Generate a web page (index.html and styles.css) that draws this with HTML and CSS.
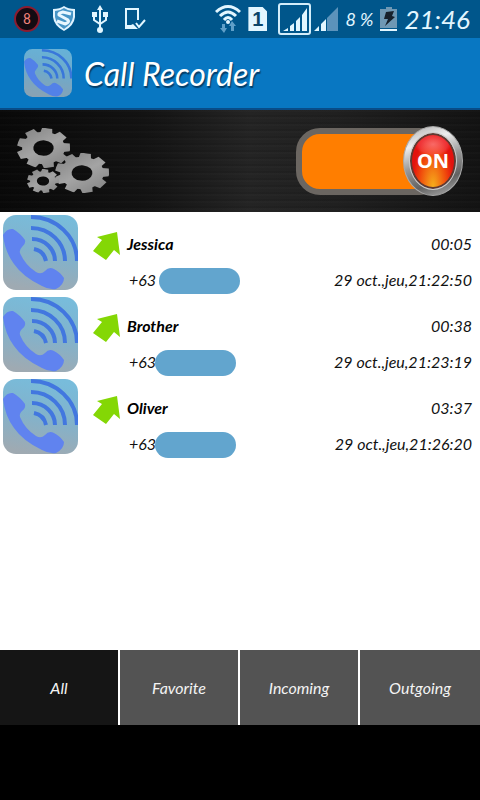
FILE: index.html
```html
<!DOCTYPE html>
<html lang="en">
<head>
  <meta charset="UTF-8" />
  <meta name="viewport" content="width=device-width, initial-scale=1.0" />
  <title>Call Recorder</title>
  <link rel="stylesheet" href="styles.css">
</head>
<body>

  <!-- shared shapes -->
  <svg class="defs" aria-hidden="true">
    <defs>
      <linearGradient id="tile" x1="0.6" y1="0" x2="0.4" y2="1">
        <stop offset="0" stop-color="#78bcdb" />
        <stop offset="0.5" stop-color="#82b2cb" />
        <stop offset="1" stop-color="#9faab2" />
      </linearGradient>
      <linearGradient id="metal" x1="0" y1="0" x2="1" y2="1">
        <stop offset="0" stop-color="#808080" />
        <stop offset="0.5" stop-color="#a4a4a4" />
        <stop offset="1" stop-color="#808080" />
      </linearGradient>
      <clipPath id="round"><rect width="75" height="75" rx="13" /></clipPath>
      <mask id="gear-mask">
        <circle r="21" fill="#fff" />
        <g fill="#fff">
          <path id="tooth" d="M-6-19L-5-26H5L6-19Z" />
          <use href="#tooth" transform="rotate(40)" />
          <use href="#tooth" transform="rotate(80)" />
          <use href="#tooth" transform="rotate(120)" />
          <use href="#tooth" transform="rotate(160)" />
          <use href="#tooth" transform="rotate(200)" />
          <use href="#tooth" transform="rotate(240)" />
          <use href="#tooth" transform="rotate(280)" />
          <use href="#tooth" transform="rotate(320)" />
        </g>
        <circle r="10" fill="#000" />
      </mask>
    </defs>
    <symbol id="phone" viewBox="0 0 75 75">
      <g clip-path="url(#round)">
        <rect width="75" height="75" fill="url(#tile)" />
        <path fill="#6083ef" d="M0 20Q4 13 10 14Q17 18 22 25Q23 29 19 32Q16 35 17 38Q22 50 33 57Q38 60 42 56Q46 51 51 54Q57 57 61 63Q61 70 53 74Q46 75 39 71Q20 62 11 49Q2 37 0 20Z" />
        <g fill="none" stroke="#4277df" stroke-width="4">
          <path d="M28 2A46 44 0 0 1 74 46" />
          <path d="M28 13A34 33 0 0 1 62 46" />
          <path d="M29 24A23 22 0 0 1 52 46" />
          <path d="M31 34Q41 36 43 46" />
        </g>
      </g>
    </symbol>
    <symbol id="arrow" viewBox="0 0 28 28">
      <path fill="#84d705" d="M4 5L24 0L27 23L21 18L13 28L0 19L9 8Z" />
    </symbol>
    <symbol id="gear" viewBox="-26 -26 52 52" preserveAspectRatio="none">
      <rect x="-26" y="-26" width="52" height="52" fill="url(#metal)" mask="url(#gear-mask)" transform="rotate(8)" />
    </symbol>
  </svg>

  <div class="status-bar">
    <div class="status-left">
      <span class="counter">8</span>
      <svg width="24" height="26" viewBox="0 0 24 26">
        <path fill="#dff3ff" d="M12 0Q16 3 23 3V11Q22 20 12 25Q2 20 1 11V3Q8 3 12 0Z" />
        <path fill="#4695c7" d="M12 2Q16 5 21 5V11Q20 18 12 23Q4 18 3 11V5Q8 5 12 2Z" />
        <path fill="none" stroke="#e8f7ff" stroke-width="3" d="M19 8L11 6Q6 7 7 9L16 14Q18 16 13 18L5 15" />
      </svg>
      <svg width="16" height="28" viewBox="0 0 16 28">
        <path fill="none" stroke="#e2f6ff" stroke-width="2" d="M8 3V24M2 10V15L8 19L14 15V10" />
        <path fill="#e2f6ff" d="M8 0L11 5H5ZM0 7H5V12H0ZM11 7H16V12H11Z" />
        <circle cx="8" cy="25" r="3" fill="#e2f6ff" />
      </svg>
      <svg width="22" height="24" viewBox="0 0 22 24">
        <path fill="none" stroke="#e2f6ff" stroke-width="2" d="M14 13V2H2V21H10" />
        <path fill="#e2f6ff" d="M1 18H7L9 17L14 22H1Z" />
        <path fill="none" stroke="#e2f6ff" stroke-width="2" d="M12 16L15 20L21 13" />
      </svg>
    </div>
    <div class="status-right">
      <svg width="26" height="30" viewBox="0 0 26 30">
        <g fill="none" stroke="#e2f6ff" stroke-width="3">
          <path d="M1 8Q13-3 25 8" />
          <path d="M5 12Q13 4 21 12" />
          <path d="M9 16Q13 11 17 16" />
        </g>
        <circle cx="13" cy="18" r="2" fill="#e2f6ff" />
        <path fill="#5f9fc8" d="M7 20H10V24H12L9 29L5 24H7ZM16 27V22H14L17 17L21 22H19V27Z" />
      </svg>
      <span class="sim">1</span>
      <svg width="33" height="32" viewBox="0 0 33 32">
        <rect x="1" y="1" width="31" height="30" rx="2" fill="none" stroke="#d3edfa" stroke-width="2" />
        <path fill="#e2f6ff" d="M5 28L10 25V28ZM12 23L16 20V28H12ZM18 18L22 14V28H18ZM24 12L29 5V28H24Z" />
      </svg>
      <svg class="signal" width="24" height="24" viewBox="0 0 24 24">
        <path fill="#5c93bb" d="M13 11L24 0V24H13Z" />
        <path fill="#e2f6ff" d="M0 24L5 19V24ZM7 17L12 12V24H7Z" />
      </svg>
      <span class="percent">8 %</span>
      <svg width="17" height="24" viewBox="0 0 17 24">
        <path fill="#6f98b4" d="M6 0H12V2H17V21H0V2H6Z" />
        <path fill="#e2f6ff" d="M0 22H17V24H0Z" />
        <path fill="#17212c" d="M6 5L14 4L12 9L15 10L5 19L8 12L4 12Z" />
      </svg>
      <span class="clock">21:46</span>
    </div>
  </div>

  <header class="app-bar">
    <svg class="app-icon" viewBox="0 0 75 75"><use href="#phone" /></svg>
    <h1>Call Recorder</h1>
  </header>

  <section class="panel">
    <button class="settings" aria-label="Settings">
      <svg width="92" height="66" viewBox="0 0 92 66">
        <use href="#gear" x="0" y="0" width="53" height="40" />
        <use href="#gear" x="38" y="25" width="54" height="40" />
        <use href="#gear" x="10" y="41" width="32" height="24" />
      </svg>
    </button>
    <label class="switch">
      <input type="checkbox" aria-label="Record calls" checked>
      <span class="knob"><span class="knob-face">ON</span></span>
    </label>
  </section>

  <ul class="calls">
    <li class="call">
      <svg class="call-icon" viewBox="0 0 75 75"><use href="#phone" /></svg>
      <svg class="call-arrow" viewBox="0 0 28 28"><use href="#arrow" /></svg>
      <div class="call-body">
        <div class="line top"><strong>Jessica</strong><span>00:05</span></div>
        <div class="line bottom"><span class="number spaced">+63</span><span class="pill"></span><span class="date">29 oct.,jeu,21:22:50</span></div>
      </div>
    </li>
    <li class="call">
      <svg class="call-icon" viewBox="0 0 75 75"><use href="#phone" /></svg>
      <svg class="call-arrow" viewBox="0 0 28 28"><use href="#arrow" /></svg>
      <div class="call-body">
        <div class="line top"><strong>Brother</strong><span>00:38</span></div>
        <div class="line bottom"><span class="number">+63</span><span class="pill"></span><span class="date">29 oct.,jeu,21:23:19</span></div>
      </div>
    </li>
    <li class="call">
      <svg class="call-icon" viewBox="0 0 75 75"><use href="#phone" /></svg>
      <svg class="call-arrow" viewBox="0 0 28 28"><use href="#arrow" /></svg>
      <div class="call-body">
        <div class="line top"><strong>Oliver</strong><span>03:37</span></div>
        <div class="line bottom"><span class="number">+63</span><span class="pill"></span><span class="date">29 oct.,jeu,21:26:20</span></div>
      </div>
    </li>
  </ul>

  <nav class="tabs">
    <button class="active">All</button>
    <button>Favorite</button>
    <button>Incoming</button>
    <button>Outgoing</button>
  </nav>

  <div class="ad-space"></div>

</body>
</html>
```
FILE: styles.css
```css
:root {
  --status: #00568b;
  --blue: #0877c2;
  --light: #e2f6ff;
  --tab: #535353;
}

* { box-sizing: border-box; }

body {
  margin: 0;
  min-height: 100vh;
  display: flex;
  flex-direction: column;
  background: #fff;
  color: #111;
  font-family: Lato, "Open Sans", sans-serif;
  font-style: italic;
  font-size: 16px;
}

svg { display: block; flex: none; }

.defs {
  position: absolute;
  width: 0;
  height: 0;
}

button {
  font: inherit;
  border: none;
  padding: 0;
  cursor: pointer;
}

/* status bar */
.status-bar {
  height: 38px;
  padding: 0 10px 0 14px;
  display: flex;
  justify-content: space-between;
  align-items: center;
  background: var(--status);
  color: var(--light);
}

.status-left {
  display: flex;
  align-items: center;
  gap: 16px;
}

.status-right {
  display: flex;
  align-items: center;
  gap: 7px;
}

.counter {
  width: 26px;
  height: 26px;
  margin-right: -4px;
  border: 2px solid #8c1c30;
  border-radius: 50%;
  background: #130b12;
  color: #f0837c;
  font: 14px/22px Roboto, sans-serif;
  text-align: center;
}

.sim {
  width: 19px;
  height: 24px;
  margin-right: 4px;
  background: var(--light);
  clip-path: polygon(0 0, 75% 0, 100% 20%, 100% 100%, 0 100%);
  color: #0b4568;
  font: bold 20px/24px "Liberation Sans", sans-serif;
  text-align: center;
}

.signal { margin-left: -4px; }

.percent {
  font-size: 18px;
  white-space: nowrap;
}

.clock {
  font-size: 26px;
}

/* title */
.app-bar {
  height: 72px;
  padding: 0 24px;
  display: flex;
  align-items: center;
  gap: 12px;
  background: var(--blue);
  border-bottom: 2px solid #084c88;
}

.app-icon {
  width: 48px;
  height: 48px;
  opacity: 0.85;
}

h1 {
  margin: 0;
  color: #fff;
  font-size: 32px;
  font-weight: normal;
  text-shadow: 1px 2px 1px #053e68;
}

/* settings + on/off */
.panel {
  height: 102px;
  padding: 0 17px;
  display: flex;
  justify-content: space-between;
  align-items: center;
  background:
    repeating-linear-gradient(rgba(255, 255, 255, 0.01) 0 2px, transparent 2px 5px, rgba(0, 0, 0, 0.08) 5px 7px),
    linear-gradient(90deg, #090909, #131313 30%, #242424 52%, #202020 70%, #131313);
}

.settings {
  background: none;
}

.switch {
  position: relative;
  width: 167px;
  height: 70px;
  display: flex;
  align-items: center;
  cursor: pointer;
}

.switch input {
  appearance: none;
  width: 148px;
  height: 67px;
  margin: 0;
  border: 6px solid #6b6661;
  border-radius: 24px;
  background: #ff7e00;
}

.knob {
  position: absolute;
  right: 0;
  top: 0;
  width: 60px;
  height: 70px;
  display: flex;
  justify-content: center;
  align-items: center;
  border: 1px solid #aaa;
  border-radius: 50%;
  background: linear-gradient(160deg, #aaa, #eee 25%, #999 50%, #626262 75%, #b5b5b5);
}

.knob-face {
  width: 46px;
  height: 56px;
  border: 2px solid #603a32;
  border-radius: 50%;
  outline: 1px solid #ccc;
  background:
    radial-gradient(18px 12px at 50% 18%, rgba(255, 130, 140, 0.7), rgba(255, 90, 100, 0.4) 80%, transparent),
    radial-gradient(ellipse at 50% 100%, #f6b01c, #f04a0c 45%, #e3120e 70%);
  color: #fff;
  font: bold 20px/52px "Noto Sans", sans-serif;
  text-align: center;
}

/* call list */
.calls {
  flex: 1;
  margin: 0;
  padding: 0;
  list-style: none;
}

.call {
  display: flex;
  align-items: flex-start;
  padding: 3px 8px 4px 3px;
}

.call-icon {
  width: 75px;
  height: 75px;
}

.call-arrow {
  width: 28px;
  height: 28px;
  margin: 17px 6px 0 15px;
}

.call-body {
  flex: 1;
  padding-top: 20px;
}

.line {
  display: flex;
  line-height: 18px;
}

.top {
  justify-content: space-between;
  height: 20px;
  margin-bottom: 13px;
}

.top strong { color: #000; }

.bottom {
  height: 26px;
  padding-left: 2px;
  line-height: 24px;
}

.call-body { margin-bottom: -4px; }

.number { width: 26px; }

.spaced { margin-right: 4px; }

.pill {
  width: 81px;
  height: 26px;
  border-radius: 13px;
  background: #62a5ce;
}

.date { margin-left: auto; }

/* bottom tabs */
.tabs {
  display: grid;
  grid-template-columns: repeat(4, 1fr);
  height: 75px;
}

.tabs button {
  border-right: 2px solid #fff;
  background: var(--tab);
  color: #f4f4f4;
}

.tabs button:last-child { border-right: none; }

.tabs .active { background: #151515; }

.ad-space {
  height: 75px;
  background: #000;
}
```
